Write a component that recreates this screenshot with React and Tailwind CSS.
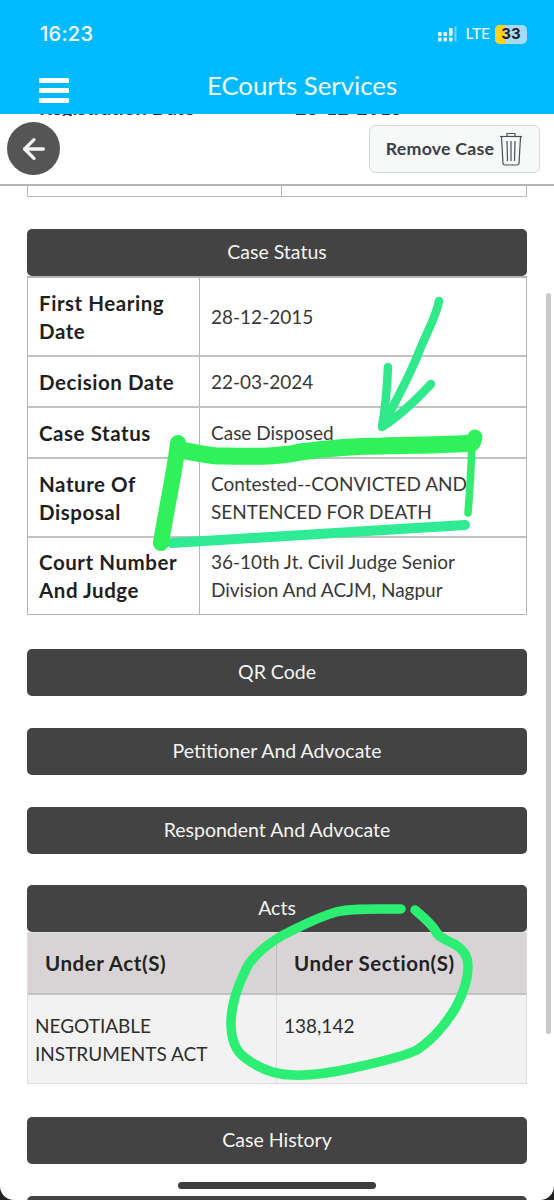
import { ArrowLeft } from "lucide-react";

const font = { fontFamily: "Lato, 'Open Sans', sans-serif" };

const SectionButton = ({ label, className = "" }) => (
  <div
    className={`h-[47px] mx-[27px] pb-[1px] rounded-[5px] bg-[#434343] flex items-center justify-center text-[19.5px] text-[#f4f4f4] ${className}`}
  >
    {label}
  </div>
);

const statusRows = [
  { label: "First Hearing Date", value: "28-12-2015", h: "h-[77px]" },
  { label: "Decision Date", value: "22-03-2024", h: "h-[51px]" },
  { label: "Case Status", value: "Case Disposed", h: "h-[51px]" },
  {
    label: "Nature Of Disposal",
    value: "Contested--CONVICTED AND SENTENCED FOR DEATH",
    h: "h-[79px]",
  },
  {
    label: "Court Number And Judge",
    value: "36-10th Jt. Civil Judge Senior Division And ACJM, Nagpur",
    h: "h-[78px]",
  },
];

const Annotations = () => (
  <svg
    className="absolute left-0 top-0 pointer-events-none"
    width="554"
    height="1200"
    viewBox="0 0 554 1200"
    fill="none"
    strokeLinecap="round"
    strokeLinejoin="round"
  >
    {/* arrow */}
    <path d="M439 301C436 318 425 335 417 357C408 378 394 405 383 425" stroke="#2fe98a" strokeWidth="8.5" />
    <path d="M388 367C387 390 385 410 382 427C398 417 416 400 431 384" stroke="#2fe98a" strokeWidth="8.5" />
    {/* box around the disposal row */}
    <path d="M172 543C184 542 300 536 465 525" stroke="#2eeb94" strokeWidth="10" />
    <path d="M472 443C471 470 470 490 468 513" stroke="#30ee6c" strokeWidth="7.5" />
    <path d="M180 450C195 452 210 457 226 456C260 457 285 456 300 452C330 448 355 446 382 446C420 445 450 445 472 443" stroke="#2ff25a" strokeWidth="17" />
    <path d="M475 437L474 441" stroke="#2ff25a" strokeWidth="15" />
    <path d="M178 443C175 470 168 500 161 543" stroke="#2ff25a" strokeWidth="16" />
    {/* circle around sections */}
    <path
      d="M401 909C375 909 350 908 336 912C315 918 298 928 283 935C266 945 254 955 247 967C238 985 231 1005 231 1023C231 1038 235 1050 244 1057C258 1068 275 1075 293 1075C315 1076 335 1072 353 1068C375 1063 400 1058 417 1050C432 1040 446 1024 456 1007C464 992 468 980 468 967C468 955 463 950 456 945C447 940 438 938 435 930C430 922 422 916 415 910"
      stroke="#2cee72"
      strokeWidth="9.5"
    />
  </svg>
);

export default function App() {
  return (
    <div className="w-[554px] h-[1200px] bg-[#222222]" style={font}>
      <div className="relative w-full h-full overflow-hidden bg-white rounded-b-[14px]">
        {/* status bar + title */}
        <div className="h-[114px] bg-[#00baff] flex flex-col text-white">
          <div className="flex items-center justify-between h-[68px] pl-[40px] pr-[27px]">
            <span className="text-[20px] font-medium tracking-[0.3px]" style={{ fontFamily: "Inter, sans-serif" }}>
              16:23
            </span>
            <div className="flex items-center gap-[5px]">
              <svg width="19" height="16" viewBox="0 0 19 16" fill="#f4fbff">
                <rect x="0" y="6" width="3.5" height="4" rx="1" />
                <rect x="0" y="11.5" width="3.5" height="4" rx="1" />
                <rect x="5.5" y="6" width="3.5" height="4" rx="1" />
                <rect x="5.5" y="11.5" width="3.5" height="4" rx="1" />
                <rect x="11" y="2" width="3.5" height="8" rx="1" />
                <rect x="11" y="11.5" width="3.5" height="4" rx="1" />
                <rect x="16.5" y="0" width="2" height="15.5" rx="1" opacity="0.45" />
              </svg>
              <span className="text-[15.5px] ml-[3px]">LTE</span>
              <div className="relative w-[32px] h-[19px] rounded-[5px] bg-[#a8daf5] overflow-hidden flex items-center justify-center">
                <div className="absolute left-0 top-0 bottom-0 w-[11px] bg-[#ffd21f]" />
                <span className="relative text-[15px] font-bold text-[#1b2430]" style={{ fontFamily: "Inter, sans-serif" }}>
                  33
                </span>
              </div>
            </div>
          </div>
          <div className="relative flex-1 flex items-start justify-center">
            <div className="absolute left-[39px] top-[10px] flex flex-col gap-[5px]">
              <div className="w-[30px] h-[5px] rounded-[1px] bg-white" />
              <div className="w-[30px] h-[5px] rounded-[1px] bg-white" />
              <div className="w-[30px] h-[5px] rounded-[1px] bg-white" />
            </div>
            <span className="text-[25.8px] leading-[30px] mt-[2px] ml-[50px] text-[#f3fbff]">ECourts Services</span>
          </div>
        </div>

        {/* clipped row behind the toolbar */}
        <div className="h-[2px] overflow-hidden text-[20px] leading-[20px] text-[#333]">
          <div className="flex pl-[39px] mt-[-17px]">
            <span className="w-[256px] shrink-0 font-bold">Registration Date</span>
            <span>28-12-2015</span>
          </div>
        </div>

        {/* toolbar */}
        <div className="h-[70px] border-b-2 border-[#b4b4b4] flex items-center justify-between pl-[7px] pr-[14px]">
          <div className="w-[53px] h-[53px] mt-[-3px] rounded-full bg-[#555555] flex items-center justify-center">
            <ArrowLeft size={32} strokeWidth={2.5} color="#f4f4f4" />
          </div>
          <div className="w-[171px] h-[48px] rounded-[6px] border border-[#d5dadd] bg-[#f7f9f9] flex items-center justify-center gap-[5px] mt-[-3px]">
            <span className="text-[17.8px] font-bold text-[#3a4049] tracking-[0.2px]">Remove Case</span>
            <svg width="24" height="34" viewBox="0 0 24 34" fill="none" stroke="#4b5056" strokeWidth="1.2">
              <path d="M8 4V1.5H16V4" />
              <path d="M1 4.5H23" />
              <path d="M2.5 5L4 31.5C4 32.5 5 33 6 33H18C19 33 20 32.5 20 31.5L21.5 5" />
              <path d="M8 9L8.5 29M12 9V29M16 9L15.5 29" />
            </svg>
          </div>
        </div>

        {/* bottom of the table above */}
        <div className="h-[11px] mx-[27px] border border-t-0 border-[#b9b9b9] flex">
          <div className="w-[254px] border-r border-[#b9b9b9]" />
        </div>

        <SectionButton label="Case Status" className="mt-[32px]" />

        {/* case status table */}
        <div className="mx-[27px] border border-t-2 border-[#b5b5b5] leading-[28px] text-[#2e2e2e]">
          {statusRows.map((row, i) => (
            <div key={row.label} className={`flex ${row.h} ${i > 0 ? "border-t-2 border-[#c2c2c2]" : ""}`}>
              <div className="w-[172px] shrink-0 border-r border-[#b5b5b5] pl-[11px] pr-[1px] flex items-center font-bold text-[20.5px] tracking-[0.55px] text-[#1f1f1f]">
                {row.label}
              </div>
              <div className="flex-1 pl-[11px] pr-[40px] flex items-center text-[19px] text-[#383838]">
                {row.value}
              </div>
            </div>
          ))}
        </div>

        <SectionButton label="QR Code" className="mt-[34px]" />
        <SectionButton label="Petitioner And Advocate" className="mt-[32px]" />
        <SectionButton label="Respondent And Advocate" className="mt-[32px]" />
        <SectionButton label="Acts" className="mt-[31px]" />

        {/* acts table */}
        <div className="mx-[27px] border border-[#dedede]">
          <div className="flex h-[62px] bg-[#d8d4d5] border-b-2 border-[#c3c1c1] text-[20.5px] tracking-[0.55px] font-bold text-[#222222]">
            <div className="w-[249px] shrink-0 pl-[17px] flex items-center border-r border-[#bdbbbb]">Under Act(S)</div>
            <div className="flex-1 pl-[17px] flex items-center">Under Section(S)</div>
          </div>
          <div className="flex h-[88px] bg-[#f3f2f2] text-[19px] leading-[28px] text-[#2e2e2e]">
            <div className="w-[249px] shrink-0 pl-[7px] pr-[20px] pt-[17px] border-r border-[#dcdcdc]">
              NEGOTIABLE INSTRUMENTS ACT
            </div>
            <div className="flex-1 pl-[7px] pt-[17px]">138,142</div>
          </div>
        </div>

        <SectionButton label="Case History" className="mt-[33px]" />
        <SectionButton label="" className="mt-[32px]" />

        {/* scrollbar */}
        <div className="absolute left-[546px] top-[293px] w-[5px] h-[741px] rounded-full bg-[#c9c9c9]" />
        {/* home indicator */}
        <div className="absolute left-[178px] top-[1182px] w-[198px] h-[7px] rounded-full bg-[#3d3d3d]" />

        <Annotations />
      </div>
    </div>
  );
}
